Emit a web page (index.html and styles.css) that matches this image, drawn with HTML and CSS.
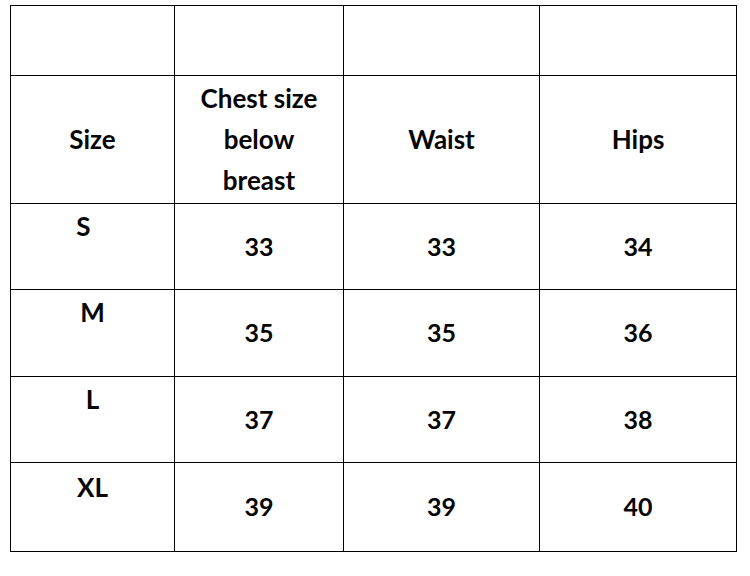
FILE: index.html
```html
<!DOCTYPE html>
<html lang="en">
<head>
<meta charset="utf-8">
<title>Size chart</title>
<link rel="stylesheet" href="styles.css">
</head>
<body>
<table class="chart">
  <colgroup>
    <col class="c1"><col class="c2"><col class="c3"><col class="c4">
  </colgroup>
  <tr class="r-empty"><td></td><td></td><td></td><td></td></tr>
  <tr class="r-head">
    <th>Size</th>
    <th>Chest size<br>below<br>breast</th>
    <th>Waist</th>
    <th>Hips</th>
  </tr>
  <tr class="r-data r1"><td class="size size-s">S</td><td>33</td><td>33</td><td>34</td></tr>
  <tr class="r-data r2"><td class="size">M</td><td>35</td><td>35</td><td>36</td></tr>
  <tr class="r-data r3"><td class="size">L</td><td>37</td><td>37</td><td>38</td></tr>
  <tr class="r-data r4"><td class="size">XL</td><td>39</td><td>39</td><td>40</td></tr>
</table>
</body>
</html>
```
FILE: styles.css
```css
html, body {
  margin: 0;
  padding: 0;
  background: #fff;
}
body {
  padding: 5px 0 0 10px;
  font-family: Lato, "Liberation Sans", sans-serif;
  font-weight: 700;
  color: #050505;
}
.chart {
  border-collapse: collapse;
  table-layout: fixed;
  width: 727px;
}
.c1 { width: 164px; }
.c2 { width: 169px; }
.c3 { width: 196px; }
.c4 { width: 197px; }
.chart td, .chart th {
  border: 1px solid #000;
  padding: 0;
  text-align: center;
  vertical-align: middle;
  font-size: 25px;
  font-weight: 700;
}
.r-empty { height: 70px; }
.r-head { height: 128px; }
.chart .r-head th { line-height: 41px; font-size: 26px; }
.r1 { height: 86px; }
.r2 { height: 87px; }
.r3 { height: 86px; }
.r4 { height: 89px; }
.r-data td { line-height: 28px; padding-bottom: 2px; }
.chart td.size {
  vertical-align: top;
  padding-top: 8px;
  padding-bottom: 0;
  font-size: 26px;
}
.chart td.size-s { padding-right: 18px; }
.chart .r4 td.size { padding-top: 10px; }
```
